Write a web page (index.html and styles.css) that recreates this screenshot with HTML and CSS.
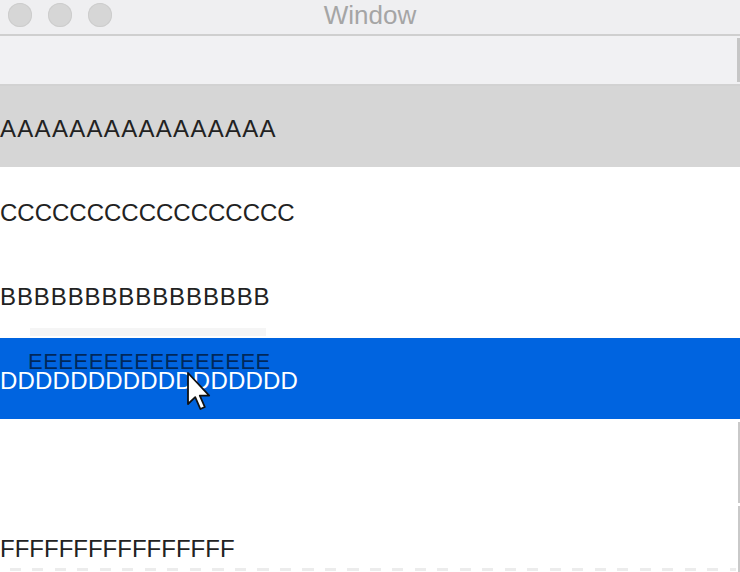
FILE: index.html
```html
<!DOCTYPE html>
<html>
<head>
<meta charset="utf-8">
<link rel="stylesheet" href="styles.css">
</head>
<body>
<div class="window">
  <div class="titlebar">
    <div class="lights">
      <span class="light"></span><span class="light"></span><span class="light"></span>
    </div>
    <div class="title">Window</div>
  </div>
  <div class="header"><span class="header-edge"></span></div>
  <div class="list">
    <div class="row row-grey"><span class="txt ls-a">AAAAAAAAAAAAAAAA</span></div>
    <div class="row"><span class="txt ls-c">CCCCCCCCCCCCCCCCC</span></div>
    <div class="row"><span class="txt ls-b">BBBBBBBBBBBBBBBB</span></div>
    <div class="row row-blue"><span class="txt ls-d">DDDDDDDDDDDDDDDDD</span></div>
    <div class="row row-edge"></div>
    <div class="row row-edge"><span class="txt ls-f">FFFFFFFFFFFFFFFF</span><span class="dashes"></span></div>
    <div class="ghost"><span class="ghost-bg"></span><span class="ghost-txt">EEEEEEEEEEEEEEEE</span></div>
    <svg class="cursor" width="26" height="40" viewBox="0 0 13 20">
      <path d="M1 1 L1 16.5 L4.6 13.1 L7.2 19 L9.4 18 L6.9 12.3 L11.6 12.3 Z" fill="#ffffff" stroke="#111" stroke-width="0.9" stroke-linejoin="round"/>
    </svg>
  </div>
</div>
</body>
</html>
```
FILE: styles.css
```css
html, body {
  margin: 0;
  padding: 0;
  background: #ffffff;
}
.window {
  width: 740px;
  height: 572px;
  overflow: hidden;
  display: flex;
  flex-direction: column;
  font-family: "Liberation Sans", Arial, sans-serif;
}
.titlebar {
  position: relative;
  flex: none;
  height: 34px;
  background: #efeff1;
  border-bottom: 2px solid #cfcfcf;
  display: flex;
  align-items: center;
}
.lights {
  display: flex;
  gap: 16px;
  padding-left: 8px;
  margin-top: -4px;
}
.light {
  width: 24px;
  height: 24px;
  border-radius: 50%;
  background: #d6d6d6;
  box-shadow: inset 0 0 0 1px #cdcdcd;
}
.title {
  position: absolute;
  left: 0;
  right: 0;
  top: 0;
  height: 30px;
  line-height: 30px;
  text-align: center;
  font-size: 26px;
  color: #a5a5a5;
}
.header {
  position: relative;
  height: 48px;
  background: #f1f1f3;
  border-bottom: 2px solid #d2d2d2;
  flex: none;
}
.header-edge {
  position: absolute;
  right: 0;
  top: 2px;
  width: 3px;
  height: 44px;
  background: #c6c6c6;
}
.list {
  position: relative;
  flex: 1;
  display: flex;
  flex-direction: column;
  min-height: 0;
}
.row {
  position: relative;
  height: 81px;
  border-bottom: 3px solid #ffffff;
  display: flex;
  align-items: center;
  flex: none;
  background: #ffffff;
}
.row-grey {
  background: #d6d6d6;
}
.row-blue {
  background: #0064e0;
}
.row-blue .txt {
  color: #ffffff;
}
.row-edge {
  box-shadow: inset -2px 0 0 #c9c9c9;
}
.txt {
  font-size: 24px;
  color: #222222;
  margin-top: 4px;
  white-space: nowrap;
}
.ls-a { letter-spacing: 1.3px; }
.ls-b { letter-spacing: 0.9px; }
.ls-c { letter-spacing: 0px; }
.ls-d { letter-spacing: 0.2px; }
.ls-f { letter-spacing: 0px; }
.dashes {
  position: absolute;
  left: 10px;
  right: 4px;
  top: 62px;
  height: 3px;
  background: repeating-linear-gradient(90deg, #ececec 0 11px, transparent 11px 22.5px);
}
.ghost {
  position: absolute;
  left: 28px;
  top: 240px;
  width: 246px;
  height: 50px;
}
.ghost-bg {
  position: absolute;
  left: 2px;
  right: 8px;
  top: 2px;
  height: 8px;
  background: #f5f5f5;
}
.ghost-txt {
  position: absolute;
  left: 0;
  top: 23px;
  font-size: 22px;
  letter-spacing: 0.5px;
  color: rgba(0, 0, 0, 0.62);
  white-space: nowrap;
}
.cursor {
  position: absolute;
  left: 186px;
  top: 285px;
}
```
